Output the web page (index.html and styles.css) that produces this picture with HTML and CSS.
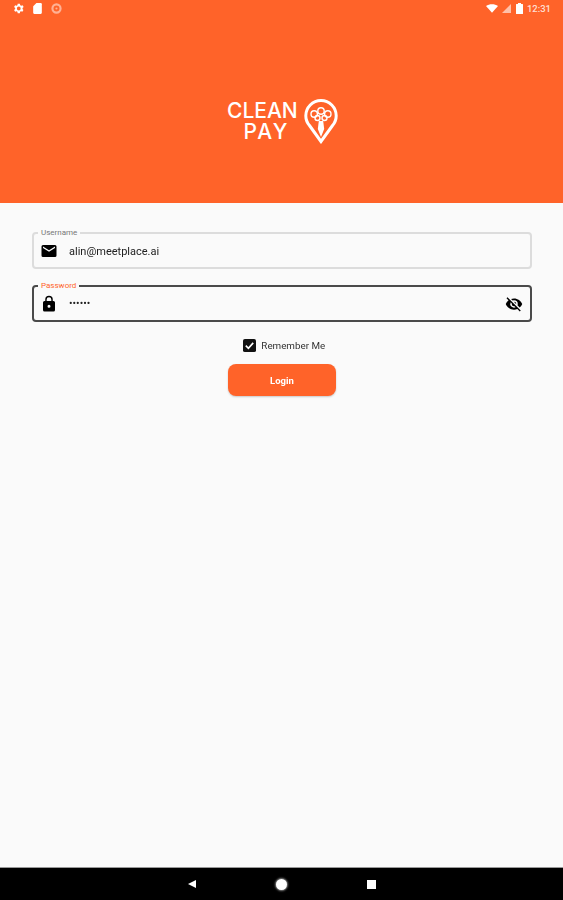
FILE: index.html
```html
<!DOCTYPE html>
<html lang="en">
<head>
<meta charset="utf-8">
<title>Clean Pay Login</title>
<link rel="stylesheet" href="styles.css">
</head>
<body>
<div class="screen">
  <header class="hero">
    <div class="status">
      <div class="status-group">
        <svg class="ic-s" viewBox="0 0 24 24"><path fill="#fff" d="M19.400 13a7.500 7.500 0 0 0 0-2l2.100-1.600-2-3.500-2.500 1a7.500 7.500 0 0 0-1.700-1L14.500 3.300h-4L10 5.900a7.500 7.500 0 0 0-1.700 1l-2.500-1-2 3.500L5.900 11a7.500 7.500 0 0 0 0 2l-2.100 1.600 2 3.500 2.500-1a7.500 7.500 0 0 0 1.700 1l.5 2.600h4l.4-2.600a7.500 7.500 0 0 0 1.700-1l2.500 1 2-3.500zM12.500 15.500a3.500 3.500 0 1 1 0-7 3.500 3.500 0 0 1 0 7z"/></svg>
        <svg class="ic-s" viewBox="0 0 24 24"><path fill="#fff" d="M10 2h8a2 2 0 0 1 2 2v16a2 2 0 0 1-2 2H6a2 2 0 0 1-2-2V8z"/></svg>
        <svg class="ic-s faded" viewBox="0 0 24 24"><circle cx="12" cy="12" r="7.500" fill="none" stroke="#fff" stroke-width="4"/><circle cx="12" cy="12" r="2" fill="#fff"/></svg>
      </div>
      <div class="status-group right">
        <svg class="ic-wifi" viewBox="0 0 14 10"><path fill="#fff" d="M0 2.200C3.800-.7 10.200-.7 14 2.200L7 10z"/></svg>
        <svg class="ic-signal" viewBox="0 0 10 10"><path fill="#fff" fill-opacity=".6" d="M10 0v10H0z"/></svg>
        <svg class="ic-batt" viewBox="0 0 7 11"><path fill="#fff" d="M2 0h3v1h1.500a.5.500 0 0 1 .5.500V10.500a.5.500 0 0 1-.5.500H.5a.5.500 0 0 1-.5-.5V1.500A.5.500 0 0 1 .5 1H2z"/></svg>
        <span class="clock">12:31</span>
      </div>
    </div>
    <div class="logo">
      <div class="logo-text"><span class="logo-line">CLEAN</span><span class="logo-line pay">PAY</span></div>
      <svg class="logo-pin" viewBox="0 0 34 45">
        <path fill="none" stroke="#fff" stroke-width="3" d="M17 42.500 5.500 26.500A15 15 0 0 1 1.800 16.700a15.200 15.200 0 0 1 30.400 0 15 15 0 0 1-3.700 9.800z"/>
        <g fill="none" stroke="#fff" stroke-width="1.400">
          <circle cx="17" cy="12" r="3.200"/><circle cx="10.200" cy="15" r="3.200"/><circle cx="23.800" cy="15" r="3.200"/>
          <circle cx="13.500" cy="19" r="2.500"/><circle cx="20.500" cy="19" r="2.500"/>
        </g>
        <path fill="#fff" d="M14.800 22h4.400l1 8-3.200 8-3.200-8z"/>
      </svg>
    </div>
  </header>

  <main class="form">
    <div class="field">
      <span class="field-label">Username</span>
      <svg class="ic" viewBox="0 0 24 24"><path fill="#000" d="M20 4H4a2 2 0 0 0-2 2v12a2 2 0 0 0 2 2h16a2 2 0 0 0 2-2V6a2 2 0 0 0-2-2zm0 4-8 5-8-5V6l8 5 8-5z"/></svg>
      <span class="field-value">alin@meetplace.ai</span>
    </div>
    <div class="field focused">
      <span class="field-label">Password</span>
      <svg class="ic" viewBox="0 0 24 24"><path fill="#000" d="M18 8h-1V6A5 5 0 0 0 7 6v2H6a2 2 0 0 0-2 2v10a2 2 0 0 0 2 2h12a2 2 0 0 0 2-2V10a2 2 0 0 0-2-2zm-6 9a2 2 0 1 1 0-4 2 2 0 0 1 0 4zm3.100-9H8.900V6a3.100 3.100 0 0 1 6.200 0z"/></svg>
      <span class="field-value dots">••••••</span>
      <svg class="ic" viewBox="0 0 24 24"><path fill="#000" d="M12 7a5 5 0 0 1 5 5c0 .650-.130 1.260-.360 1.830l2.920 2.920A11.800 11.800 0 0 0 23 12c-1.730-4.390-6-7.500-11-7.500-1.400 0-2.740.25-3.980.7l2.160 2.160A4.900 4.900 0 0 1 12 7zM2 4.270l2.280 2.280.46.46A11.800 11.800 0 0 0 1 12c1.730 4.390 6 7.500 11 7.500 1.550 0 3.030-.3 4.380-.84l.42.42L19.730 22 21 20.730 3.270 3zM7.530 9.800l1.550 1.550A2.800 2.800 0 0 0 9 12a3 3 0 0 0 3 3c.22 0 .44-.3.650-.08l1.550 1.550A5 5 0 0 1 7.530 9.800zm4.310-.78 3.150 3.150.02-.17a3 3 0 0 0-3-3z"/></svg>
    </div>
    <label class="remember">
      <svg class="check" viewBox="0 0 14 14"><rect width="14" height="14" rx="2" fill="#111"/><path fill="none" stroke="#fff" stroke-width="1.800" d="M3 7.200l2.800 2.800L11 4.200"/></svg>
      <span>Remember Me</span>
    </label>
    <button class="login" type="button">Login</button>
  </main>

  <nav class="navbar">
    <span class="nav-back"></span>
    <span class="nav-home"></span>
    <span class="nav-recent"></span>
  </nav>
</div>
</body>
</html>
```

FILE: styles.css
```css
* { box-sizing: border-box; }
html, body { margin: 0; height: 100%; }
body { font-family: Roboto, "Liberation Sans", sans-serif; background: #fafafa; }
.screen { height: 900px; display: flex; flex-direction: column; filter: blur(.4px); }

.hero { height: 203px; background: #ff6329; display: flex; flex-direction: column; flex: none; }
.status { height: 17px; padding: 0 12px 0 12px; display: flex; justify-content: space-between; align-items: center; }
.status-group { display: flex; align-items: center; gap: 6px; }
.status-group.right { gap: 4px; }
.ic-s { width: 13px; height: 13px; display: block; }
.faded { opacity: .5; }
.ic-wifi { width: 12px; height: 9px; display: block; margin-right: 0; }
.ic-signal { width: 9px; height: 9px; display: block; }
.ic-batt { width: 7px; height: 11px; display: block; margin: 0 0 0 1px; }
.clock { color: rgba(255,255,255,.8); font-size: 9.500px; font-weight: 500; }

.logo { margin: 82px 0 0 227px; display: flex; align-items: center; gap: 6px; align-self: flex-start; }
.logo-text { display: flex; flex-direction: column; align-items: center; color: #fff; font-family: Inter, sans-serif; font-weight: 500; font-size: 21px; }
.logo-line { display: block; height: 20px; line-height: 20px; }
.pay { margin-top: 1px; padding-left: 8px; letter-spacing: 2px; }
.logo-pin { width: 34px; height: 45px; display: block; }

.form { flex: 1; padding: 29px 31px 0 32px; display: flex; flex-direction: column; align-items: center; }
.field { position: relative; width: 100%; height: 37px; border: 2px solid #dcdcdc; border-radius: 4px; display: flex; align-items: center; padding: 0 7px 0 6px; margin-bottom: 16px; }
.field.focused { border-color: #4a4a4a; }
.field-label { position: absolute; left: 4px; top: -6px; padding: 0 3px; background: #fafafa; font-size: 8px; line-height: 9px; color: #777; }
.focused .field-label { color: #ff6329; }
.ic { width: 18px; height: 18px; display: block; flex: none; }
.field-value { flex: 1; margin-left: 11px; padding-top: 1px; font-size: 11px; color: #222; }
.dots { font-size: 10.500px; color: #222; padding-top: 0; }

.remember { display: flex; align-items: center; gap: 5px; font-size: 9.800px; color: #333; height: 14px; margin: 0 0 12px 4.500px; }
.check { width: 13px; height: 13px; display: block; }
.login { width: 108px; height: 32px; background: #ff6329; color: #fff; border: 0; border-radius: 8px; font: 700 9.500px Roboto, sans-serif; box-shadow: 0 1px 2px rgba(0,0,0,.2); }

.navbar { height: 33px; flex: none; background: #000; border-top: 1px solid #999; display: flex; align-items: center; justify-content: center; gap: 80px; padding-left: 1px; }
.nav-back { width: 0; height: 0; border-style: solid; border-width: 4.500px 8px 4.500px 0; border-color: transparent #fff transparent transparent; }
.nav-home { width: 11px; height: 11px; border-radius: 50%; background: #fff; box-shadow: 0 0 2px 1px #888; }
.nav-recent { width: 9px; height: 9px; background: #fff; }
```
